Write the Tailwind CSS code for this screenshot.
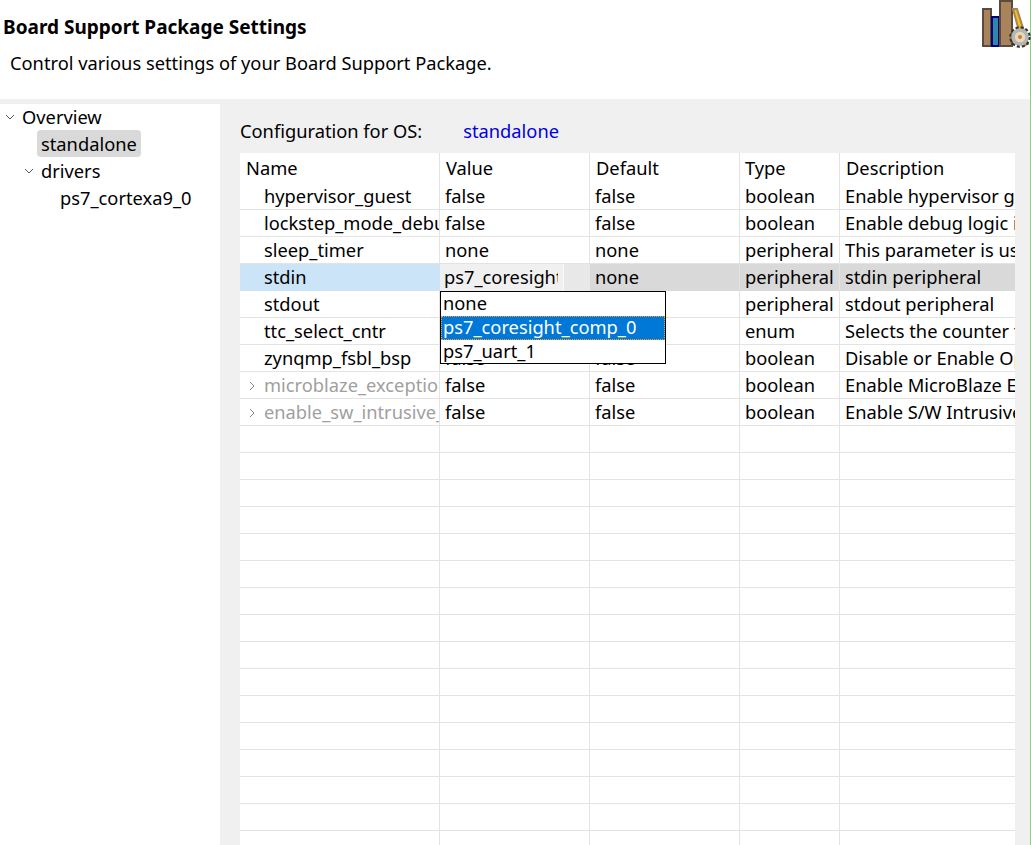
<!DOCTYPE html>
<html lang="en">
<head>
  <meta charset="UTF-8" />
  <title>Board Support Package Settings</title>
  <script src="https://cdn.jsdelivr.net/npm/@tailwindcss/browser@4"></script>
</head>
<body class="w-[1031px] h-[845px] overflow-hidden bg-[#f0f0f0] font-['Noto_Sans',sans-serif] text-[18.3px] text-black leading-[27px]">
  <div class="flex h-full border-r border-[#8fc98f]">
    <div class="flex-1 flex flex-col min-w-0">

      <!-- header -->
      <header class="h-[99px] shrink-0 bg-white relative">
        <h1 class="pt-[14px] pl-[3px] font-bold text-[19px]">Board Support Package Settings</h1>
        <p class="pt-[8px] pl-[10px]">Control various settings of your Board Support Package.</p>
        <svg class="absolute left-[981px] top-0" width="50" height="48" viewBox="0 0 50 48">
          <rect x="2" y="9" width="8" height="37" fill="#a9835a" stroke="#5a4a40" stroke-width="2"/>
          <rect x="11" y="17" width="7" height="29" fill="#2a8aa8" stroke="#000080" stroke-width="2"/>
          <rect x="19" y="1" width="12" height="45" fill="#a9835a" stroke="#5a4a40" stroke-width="2"/>
          <path d="M32 9 L36 9 L47 44 L42 46 Z" fill="#f0c020" stroke="#a9835a" stroke-width="2"/>
          <circle cx="39" cy="37" r="9.5" fill="none" stroke="#333" stroke-width="2.5" stroke-dasharray="3 2"/>
          <circle cx="39" cy="37" r="7" fill="#e8d8b8" stroke="#b4b4b4" stroke-width="3.5"/>
          <circle cx="39" cy="37" r="2" fill="#c08030"/>
        </svg>
      </header>

      <div class="flex-1 flex min-h-0 pt-[5px]">
        <!-- tree -->
        <nav class="w-[220px] shrink-0 bg-white">
          <div class="h-[26px] flex items-start pl-[5px] gap-[7px] leading-[26px]">
            <svg class="mt-[8px]" width="10" height="10" viewBox="0 0 10 10" fill="none" stroke="#555"><path d="M1 3 L5 7 L9 3"/></svg>
            <span>Overview</span>
          </div>
          <div class="h-[27px] flex items-center pl-[37px]">
            <span class="bg-[#d9d9d9] rounded-sm px-[4px]">standalone</span>
          </div>
          <div class="h-[27px] flex items-center pl-[24px] gap-[7px]">
            <svg width="10" height="10" viewBox="0 0 10 10" fill="none" stroke="#555"><path d="M1 3 L5 7 L9 3"/></svg>
            <span>drivers</span>
          </div>
          <div class="h-[27px] flex items-center pl-[60px]">ps7_cortexa9_0</div>
        </nav>

        <!-- config -->
        <main class="flex-1 min-w-0 pl-[20px] pr-[15px]">
          <div class="h-[49px] flex items-center gap-[41px] pt-[4px]">
            <span>Configuration for OS:</span>
            <span class="text-[#0000e0]">standalone</span>
          </div>

          <div class="relative h-[692px] bg-white overflow-hidden">
            <div>
              <div class="grid grid-cols-[200px_150px_150px_100px_175px] h-[30px] leading-[29px] whitespace-nowrap">
                <div class="pl-[6px] border-r border-[#e3e3e3]">Name</div>
                <div class="pl-[6px] border-r border-[#e3e3e3]">Value</div>
                <div class="pl-[6px] border-r border-[#e3e3e3]">Default</div>
                <div class="pl-[5px] border-r border-[#e3e3e3]">Type</div>
                <div class="pl-[6px]">Description</div>
              </div>
              <div class="grid grid-cols-[200px_150px_150px_100px_175px] h-[27px] leading-[26px] whitespace-nowrap border-b border-[#e3e3e3]">
                <div class="pl-[24px] border-r border-[#e3e3e3] overflow-hidden">hypervisor_guest</div>
                <div class="pl-[5px] border-r border-[#e3e3e3] overflow-hidden">false</div>
                <div class="pl-[5px] border-r border-[#e3e3e3] overflow-hidden">false</div>
                <div class="pl-[5px] border-r border-[#e3e3e3] overflow-hidden">boolean</div>
                <div class="pl-[5px] overflow-hidden">Enable hypervisor guest</div>
              </div>
              <div class="grid grid-cols-[200px_150px_150px_100px_175px] h-[27px] leading-[26px] whitespace-nowrap border-b border-[#e3e3e3]">
                <div class="pl-[24px] border-r border-[#e3e3e3] overflow-hidden">lockstep_mode_debug</div>
                <div class="pl-[5px] border-r border-[#e3e3e3] overflow-hidden">false</div>
                <div class="pl-[5px] border-r border-[#e3e3e3] overflow-hidden">false</div>
                <div class="pl-[5px] border-r border-[#e3e3e3] overflow-hidden">boolean</div>
                <div class="pl-[5px] overflow-hidden">Enable debug logic in</div>
              </div>
              <div class="grid grid-cols-[200px_150px_150px_100px_175px] h-[27px] leading-[26px] whitespace-nowrap border-b border-[#e3e3e3]">
                <div class="pl-[24px] border-r border-[#e3e3e3] overflow-hidden">sleep_timer</div>
                <div class="pl-[5px] border-r border-[#e3e3e3] overflow-hidden">none</div>
                <div class="pl-[5px] border-r border-[#e3e3e3] overflow-hidden">none</div>
                <div class="pl-[5px] border-r border-[#e3e3e3] overflow-hidden">peripheral</div>
                <div class="pl-[5px] overflow-hidden">This parameter is used</div>
              </div>
              <div class="grid grid-cols-[200px_150px_150px_100px_175px] h-[27px] leading-[26px] whitespace-nowrap bg-[#d9d9d9]">
                <div class="pl-[24px] bg-[#cce4f7] overflow-hidden">stdin</div>
                <div class="flex bg-[#f0f0f0] overflow-hidden">
                  <span class="w-[118px] pl-[4px] overflow-hidden">ps7_coresight_comp_0</span>
                  <span class="w-[6px] border-r border-[#fafafa]"></span>
                  <span class="flex-1 bg-[#e8e8e8]"></span>
                </div>
                <div class="pl-[5px] border-r border-[#e3e3e3] overflow-hidden">none</div>
                <div class="pl-[5px] border-r border-[#e3e3e3] overflow-hidden">peripheral</div>
                <div class="pl-[5px] overflow-hidden">stdin peripheral</div>
              </div>
              <div class="grid grid-cols-[200px_150px_150px_100px_175px] h-[27px] leading-[26px] whitespace-nowrap border-b border-[#e3e3e3]">
                <div class="pl-[24px] border-r border-[#e3e3e3] overflow-hidden">stdout</div>
                <div class="pl-[5px] border-r border-[#e3e3e3] overflow-hidden">none</div>
                <div class="pl-[5px] border-r border-[#e3e3e3] overflow-hidden">none</div>
                <div class="pl-[5px] border-r border-[#e3e3e3] overflow-hidden">peripheral</div>
                <div class="pl-[5px] overflow-hidden">stdout peripheral</div>
              </div>
              <div class="grid grid-cols-[200px_150px_150px_100px_175px] h-[27px] leading-[26px] whitespace-nowrap border-b border-[#e3e3e3]">
                <div class="pl-[24px] border-r border-[#e3e3e3] overflow-hidden">ttc_select_cntr</div>
                <div class="pl-[5px] border-r border-[#e3e3e3] overflow-hidden">0</div>
                <div class="pl-[5px] border-r border-[#e3e3e3] overflow-hidden">0</div>
                <div class="pl-[5px] border-r border-[#e3e3e3] overflow-hidden">enum</div>
                <div class="pl-[5px] overflow-hidden">Selects the counter to</div>
              </div>
              <div class="grid grid-cols-[200px_150px_150px_100px_175px] h-[27px] leading-[26px] whitespace-nowrap border-b border-[#e3e3e3]">
                <div class="pl-[24px] border-r border-[#e3e3e3] overflow-hidden">zynqmp_fsbl_bsp</div>
                <div class="pl-[5px] border-r border-[#e3e3e3] overflow-hidden">false</div>
                <div class="pl-[5px] border-r border-[#e3e3e3] overflow-hidden">false</div>
                <div class="pl-[5px] border-r border-[#e3e3e3] overflow-hidden">boolean</div>
                <div class="pl-[5px] overflow-hidden">Disable or Enable Opt</div>
              </div>
              <div class="grid grid-cols-[200px_150px_150px_100px_175px] h-[27px] leading-[26px] whitespace-nowrap border-b border-[#e3e3e3]">
                <div class="relative pl-[24px] text-[#a0a0a0] border-r border-[#e3e3e3] overflow-hidden">
                  <svg class="absolute left-[7px] top-[9px]" width="10" height="10" viewBox="0 0 10 10" fill="none" stroke="#888"><path d="M3 1 L7 5 L3 9"/></svg>microblaze_exceptions
                </div>
                <div class="pl-[5px] border-r border-[#e3e3e3] overflow-hidden">false</div>
                <div class="pl-[5px] border-r border-[#e3e3e3] overflow-hidden">false</div>
                <div class="pl-[5px] border-r border-[#e3e3e3] overflow-hidden">boolean</div>
                <div class="pl-[5px] overflow-hidden">Enable MicroBlaze Exc</div>
              </div>
              <div class="grid grid-cols-[200px_150px_150px_100px_175px] h-[27px] leading-[26px] whitespace-nowrap border-b border-[#e3e3e3]">
                <div class="relative pl-[24px] text-[#a0a0a0] border-r border-[#e3e3e3] overflow-hidden">
                  <svg class="absolute left-[7px] top-[9px]" width="10" height="10" viewBox="0 0 10 10" fill="none" stroke="#888"><path d="M3 1 L7 5 L3 9"/></svg>enable_sw_intrusive_profiling
                </div>
                <div class="pl-[5px] border-r border-[#e3e3e3] overflow-hidden">false</div>
                <div class="pl-[5px] border-r border-[#e3e3e3] overflow-hidden">false</div>
                <div class="pl-[5px] border-r border-[#e3e3e3] overflow-hidden">boolean</div>
                <div class="pl-[5px] overflow-hidden">Enable S/W Intrusive P</div>
              </div>
            </div>
            <!-- empty rows -->
            <div class="h-[420px] bg-[repeating-linear-gradient(to_bottom,transparent_0,transparent_26px,#e3e3e3_26px,#e3e3e3_27px)] grid grid-cols-[200px_150px_150px_100px_175px]">
              <div class="border-r border-[#e3e3e3]"></div>
              <div class="border-r border-[#e3e3e3]"></div>
              <div class="border-r border-[#e3e3e3]"></div>
              <div class="border-r border-[#e3e3e3]"></div>
              <div></div>
            </div>

            <!-- open combo list -->
            <ul class="absolute left-[200px] top-[138px] w-[226px] h-[73px] bg-white border border-black leading-[22px]">
              <li class="h-[24px] pl-[2px]">none</li>
              <li class="h-[24px] pl-[2px] bg-[#0078d7] text-white outline-1 -outline-offset-1 outline-dotted outline-[#f5a623]">ps7_coresight_comp_0</li>
              <li class="h-[24px] pl-[2px]">ps7_uart_1</li>
            </ul>
          </div>
        </main>
      </div>
    </div>
  </div>
</body>
</html>
